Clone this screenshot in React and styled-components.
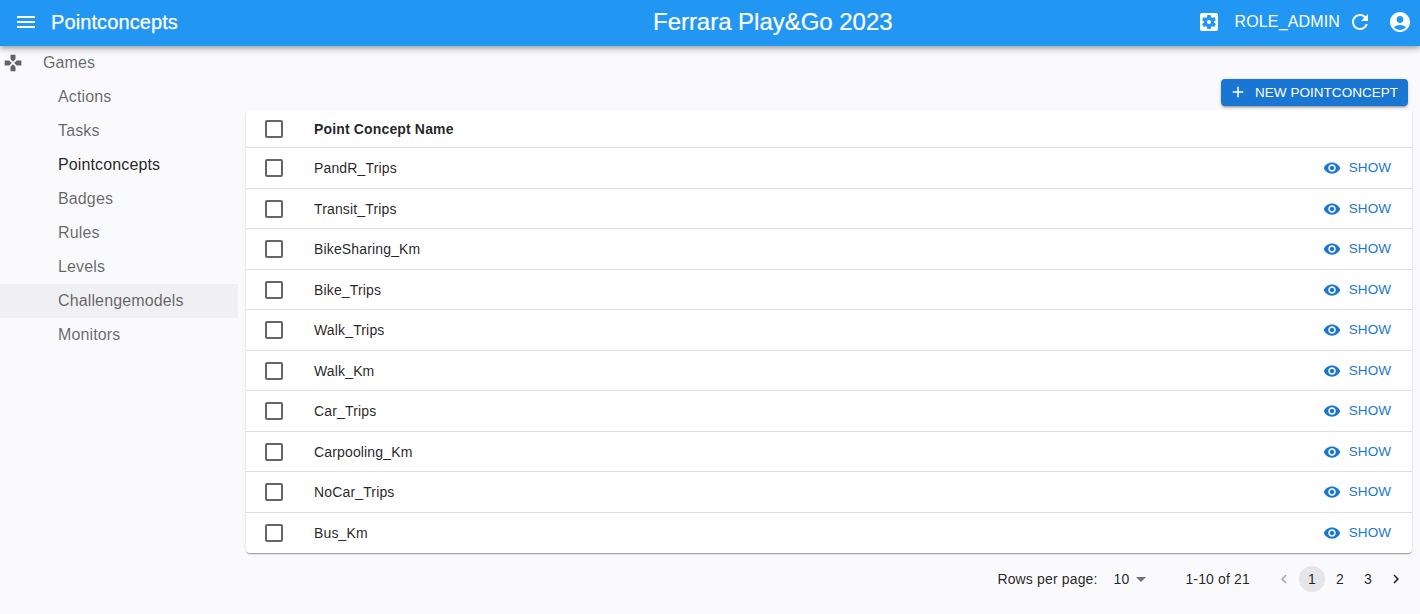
import React from "react";
import styled, { createGlobalStyle } from "styled-components";
import {
  MdMenu, MdGames, MdSettingsApplications, MdRefresh, MdAdd,
  MdVisibility, MdCheckBoxOutlineBlank, MdArrowDropDown, MdNavigateBefore, MdNavigateNext,
} from "react-icons/md";

const GlobalStyle = createGlobalStyle`
  *, *::before, *::after { box-sizing: border-box; }
  body {
    margin: 0;
    background: #fafafd;
    color: rgba(0, 0, 0, 0.87);
    font-family: "Liberation Sans", Arial, sans-serif;
    overflow: hidden;
  }
  button { font-family: inherit; border: 0; background: none; padding: 0; margin: 0; cursor: pointer; }
  svg { display: block; flex-shrink: 0; }
`;

const Page = styled.div`
  height: 614px;
  display: flex;
  flex-direction: column;
`;

const AppBar = styled.header`
  height: 46px;
  flex-shrink: 0;
  display: flex;
  align-items: center;
  padding: 0 8px 2px 14px;
  background: #2196f3;
  color: #fff;
  z-index: 1;
  box-shadow: 0 2px 4px -1px rgba(0, 0, 0, 0.2), 0 4px 5px 0 rgba(0, 0, 0, 0.14), 0 1px 10px 0 rgba(0, 0, 0, 0.12);
`;

const SectionTitle = styled.h6`
  margin: 0 0 0 13px;
  width: 602px;
  font-size: 20px;
  font-weight: 400;
  line-height: 32px;
  letter-spacing: 0.1px;
  -webkit-text-stroke: 0.25px currentColor;
`;

const AppTitle = styled.div`
  flex: 1;
  font-size: 24px;
  line-height: 32px;
  letter-spacing: -0.03px;
  -webkit-text-stroke: 0.2px currentColor;
`;

const RoleLabel = styled.span`
  margin: 0 8px 0 13px;
  font-size: 16px;
  letter-spacing: 0.15px;
`;

const RefreshIcon = styled(MdRefresh)`
  margin-right: 16px;
`;

const Body = styled.div`
  flex: 1;
  display: flex;
`;

const Sidebar = styled.nav`
  width: 238px;
  flex-shrink: 0;
`;

const MenuEntry = styled.a`
  display: flex;
  align-items: center;
  height: 34px;
  padding-left: ${(p) => (p.$root ? "3px" : "58px")};
  font-size: 16px;
  letter-spacing: 0.13px;
  color: ${(p) => (p.$active ? "rgba(0, 0, 0, 0.87)" : "rgba(0, 0, 0, 0.6)")};
  background: ${(p) => (p.$hovered ? "rgba(0, 0, 0, 0.04)" : "transparent")};
  svg { margin-right: 20px; }
`;

const Main = styled.main`
  flex: 1;
  padding: 33px 8px 0 8px;
`;

const Toolbar = styled.div`
  display: flex;
  justify-content: flex-end;
  padding-right: 4px;
`;

const CreateButton = styled.button`
  display: flex;
  align-items: center;
  height: 27px;
  width: 187px;
  padding-left: 8px;
  gap: 8px;
  white-space: nowrap;
  border-radius: 4px;
  background: #1976d2;
  color: #fff;
  font-size: 13.5px;
  letter-spacing: 0.04px;
  box-shadow: 0 3px 1px -2px rgba(0, 0, 0, 0.2), 0 2px 2px 0 rgba(0, 0, 0, 0.14), 0 1px 5px 0 rgba(0, 0, 0, 0.12);
  svg { margin-bottom: 1px; }
`;

const Card = styled.section`
  margin-top: 4px;
  height: 443px;
  border-radius: 4px;
  background: #fff;
  box-shadow: 0 2px 1px -1px rgba(0, 0, 0, 0.2), 0 1px 1px 0 rgba(0, 0, 0, 0.14), 0 1px 3px 0 rgba(0, 0, 0, 0.12);
`;

const Row = styled.div`
  display: flex;
  align-items: center;
  height: ${(p) => (p.$head ? "38px" : "40.5px")};
  padding: ${(p) => (p.$head ? "0" : "0.5px")} 21px 0 16px;
  border-bottom: 1px solid ${(p) => (p.$last ? "transparent" : "#e0e0e0")};
  font-size: 14px;
  font-weight: ${(p) => (p.$head ? 700 : 400)};
  letter-spacing: 0.15px;
`;

const Checkbox = styled(MdCheckBoxOutlineBlank)`
  color: rgba(0, 0, 0, 0.6);
  margin-right: 28px;
`;

const Cell = styled.span`
  flex: 1;
`;

const ShowButton = styled.button`
  display: flex;
  align-items: center;
  gap: 8px;
  color: #1976d2;
  font-size: 13.5px;
  letter-spacing: 0.04px;
`;

const ButtonText = styled.span`
  line-height: 18px;
  padding: 1px 0 0.5px;
`;

const Pagination = styled.footer`
  display: flex;
  align-items: center;
  justify-content: flex-end;
  height: 52px;
  padding-right: 3px;
  font-size: 14px;
  letter-spacing: 0.15px;
`;

const PageSize = styled.button`
  display: flex;
  align-items: center;
  margin: 0 32px 0 16px;
  font-size: 14px;
  letter-spacing: 0.15px;
  color: inherit;
  svg { color: rgba(0, 0, 0, 0.54); }
`;

const Pages = styled.div`
  display: flex;
  gap: 2px;
  margin-left: 21px;
`;

const PageButton = styled.button`
  display: flex;
  align-items: center;
  justify-content: center;
  width: 26px;
  height: 26px;
  border-radius: 13px;
  font-size: 14px;
  color: inherit;
  background: ${(p) => (p.$current ? "rgba(0, 0, 0, 0.08)" : "transparent")};
  opacity: ${(p) => (p.$disabled ? 0.38 : 1)};
`;

const AccountIcon = () => (
  <svg width="24" height="24" viewBox="0 0 24 24" fill="currentColor">
    <path d="M12 2C6.48 2 2 6.48 2 12s4.48 10 10 10 10-4.48 10-10S17.52 2 12 2zm0 4c1.93 0 3.5 1.57 3.5 3.5S13.93 13 12 13s-3.5-1.57-3.5-3.5S10.07 6 12 6zm0 14c-2.03 0-4.43-.82-6.14-2.88C7.55 15.8 9.68 15 12 15s4.45.8 6.14 2.12C16.43 19.18 14.03 20 12 20z" />
  </svg>
);

const MENU = ["Actions", "Tasks", "Pointconcepts", "Badges", "Rules", "Levels", "Challengemodels", "Monitors"];
const CONCEPTS = [
  "PandR_Trips", "Transit_Trips", "BikeSharing_Km", "Bike_Trips", "Walk_Trips",
  "Walk_Km", "Car_Trips", "Carpooling_Km", "NoCar_Trips", "Bus_Km",
];

export default function App() {
  return (
    <Page>
      <GlobalStyle />
      <AppBar>
        <MdMenu size={24} />
        <SectionTitle>Pointconcepts</SectionTitle>
        <AppTitle>Ferrara Play&amp;Go 2023</AppTitle>
        <MdSettingsApplications size={24} />
        <RoleLabel>ROLE_ADMIN</RoleLabel>
        <RefreshIcon size={24} />
        <AccountIcon />
      </AppBar>
      <Body>
        <Sidebar>
          <MenuEntry $root><MdGames size={20} />Games</MenuEntry>
          {MENU.map((name) => (
            <MenuEntry key={name} $active={name === "Pointconcepts"} $hovered={name === "Challengemodels"}>
              {name}
            </MenuEntry>
          ))}
        </Sidebar>
        <Main>
          <Toolbar>
            <CreateButton><MdAdd size={18} /><ButtonText>NEW POINTCONCEPT</ButtonText></CreateButton>
          </Toolbar>
          <Card>
            <Row $head><Checkbox size={24} /><Cell>Point Concept Name</Cell></Row>
            {CONCEPTS.map((name, i) => (
              <Row key={name} $last={i === CONCEPTS.length - 1}>
                <Checkbox size={24} />
                <Cell>{name}</Cell>
                <ShowButton><MdVisibility size={18} /><ButtonText>SHOW</ButtonText></ShowButton>
              </Row>
            ))}
          </Card>
          <Pagination>
            <span>Rows per page:</span>
            <PageSize>10<MdArrowDropDown size={24} /></PageSize>
            <span>1-10 of 21</span>
            <Pages>
              <PageButton $disabled><MdNavigateBefore size={18} /></PageButton>
              <PageButton $current>1</PageButton>
              <PageButton>2</PageButton>
              <PageButton>3</PageButton>
              <PageButton><MdNavigateNext size={18} /></PageButton>
            </Pages>
          </Pagination>
        </Main>
      </Body>
    </Page>
  );
}
